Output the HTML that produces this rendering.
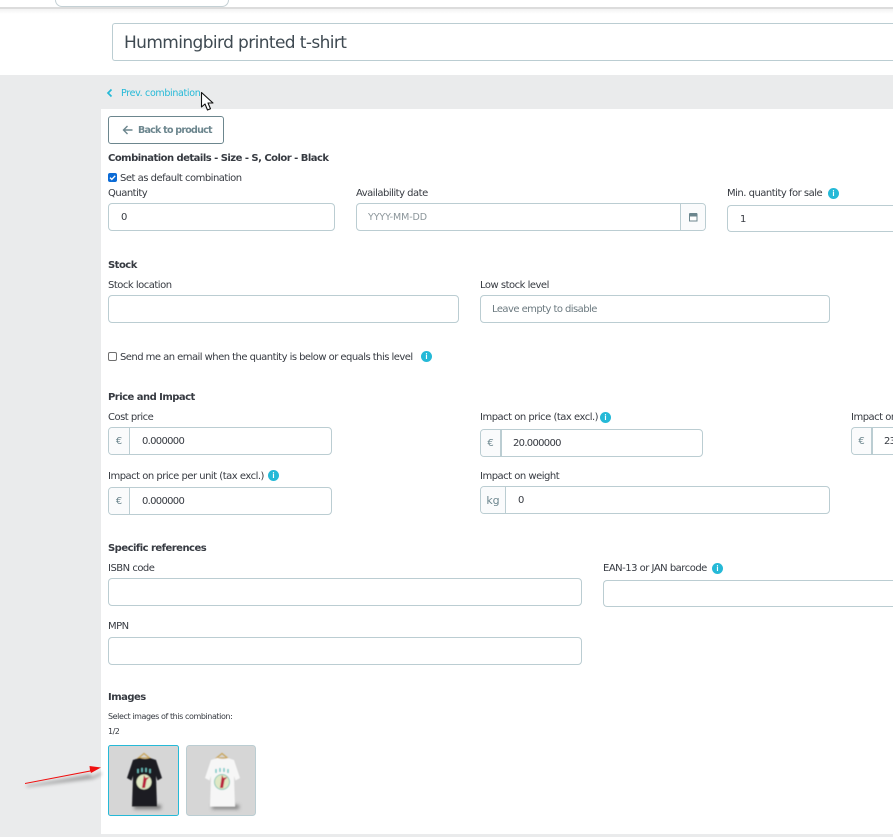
<!DOCTYPE html>
<html><head><meta charset="utf-8">
<style>
html,body{margin:0;padding:0;overflow:hidden}
body{width:893px;height:837px;position:relative;background:#eaebec;font-family:"DejaVu Sans","Liberation Sans",sans-serif;color:#363a41}
div,span{position:absolute;box-sizing:border-box}
.t{white-space:nowrap;font-size:10px;line-height:14px;letter-spacing:-.5px;margin-top:2px}
.b{font-weight:bold;letter-spacing:-.52px}
.i{border:1px solid #bbcdd2;border-radius:4px;background:#fff;height:28px}
.o{border-right:0;border-radius:4px 0 0 4px}
.a{position:absolute;left:0;top:0;bottom:0;background:#fafbfc;border-right:1px solid #bbcdd2;border-radius:3px 0 0 3px;color:#6c868e;text-align:center;font-size:10px;line-height:27px}
.v{font-size:10px;line-height:26px;white-space:nowrap;letter-spacing:-.7px;margin-top:1px}
.n{width:11px;height:11px;border-radius:50%;background:#25b9d7;color:#fff;font-size:8px;line-height:11px;text-align:center;font-weight:bold;font-family:"Liberation Sans",sans-serif}
.cb{width:9px;height:9px;border-radius:2px}
</style></head><body>
<div style="left:0;top:0;width:893px;height:75px;background:#fff"></div>
<div style="left:0;top:7px;width:893px;height:2px;background:#dcdcdc"></div>
<div style="left:0;top:9px;width:893px;height:5px;background:linear-gradient(#f3f3f3,#fff)"></div>
<div style="left:55px;top:0;width:174px;height:7px;border:1px solid #c4d0d4;border-top:0;border-radius:0 0 8px 8px;background:#fff"></div>
<div style="left:112px;top:23px;width:781px;height:38px;border:1px solid #bbcdd2;border-right:0;border-radius:3px 0 0 3px;background:#fff"></div>
<div class="t" style="left:124px;top:29px;font-size:17px;line-height:24px;letter-spacing:-.61px;color:#3f4a52">Hummingbird printed t-shirt</div>

<svg style="position:absolute;left:105px;top:88px" width="10" height="10"><path d="M6.500 1.500L3 5l3.500 3.500" fill="none" stroke="#25b9d7" stroke-width="1.700"/></svg>
<div class="t" style="left:121px;top:85px;color:#25b9d7;font-size:9.5px;letter-spacing:-.33px">Prev. combination</div>

<div style="left:101px;top:109px;width:792px;height:725px;background:#fff"></div>

<svg style="position:absolute;left:200px;top:91px;z-index:5" width="16" height="22"><path d="M1.500 1.500V16l3.500-3 2.500 6 3-1.200-2.500-5.800H13z" fill="#fff" stroke="#111" stroke-width="1.100" stroke-linejoin="round"/></svg>

<div style="left:108px;top:116px;width:116px;height:28px;border:1px solid #6c868e;border-radius:3px;background:#fff"></div>
<svg style="position:absolute;left:122px;top:124px" width="12" height="12"><path d="M10.500 6H2M5.500 2L1.500 6l4 4" fill="none" stroke="#6c868e" stroke-width="1.400"/></svg>
<div class="t b" style="left:138px;top:122px;color:#6c868e;font-size:9.5px;letter-spacing:-.75px">Back to product</div>
<div class="t b" style="left:108px;top:150px">Combination details - Size - S, Color - Black</div>

<div class="cb" style="left:108px;top:173px;background:#0b6bd6"></div>
<svg style="position:absolute;left:108px;top:173px" width="9" height="9"><path d="M2 4.600l1.800 1.800L7.200 2.800" fill="none" stroke="#fff" stroke-width="1.400"/></svg>
<div class="t" style="left:120px;top:170px">Set as default combination</div>

<div class="t" style="left:108px;top:185px">Quantity</div>
<div class="i" style="left:108px;top:203px;width:227px"><span class="v" style="left:12px;top:0">0</span></div>
<div class="t" style="left:356px;top:185px">Availability date</div>
<div class="i" style="left:356px;top:203px;width:350px"><span class="v" style="left:11px;top:0;color:#8a9499;font-size:9.5px;letter-spacing:-.1px">YYYY-MM-DD</span>
<div class="a" style="left:auto;right:0;width:25px;border-right:0;border-left:1px solid #bbcdd2;border-radius:0 3px 3px 0"></div>
<svg style="position:absolute;left:332px;top:9px" width="9" height="9"><rect x=".5" y="1" width="7.500" height="7" fill="#fff" stroke="#6c868e" stroke-width="1"/><rect x=".5" y="0" width="7.500" height="3.500" fill="#6c868e"/></svg></div>
<div class="t" style="left:727px;top:185px">Min. quantity for sale</div>
<div class="n" style="left:828px;top:188px">i</div>
<div class="i o" style="left:727px;top:205px;width:166px;height:27px"><span class="v" style="left:12px;top:0">1</span></div>

<div class="t b" style="left:108px;top:257px">Stock</div>
<div class="t" style="left:108px;top:277px">Stock location</div>
<div class="i" style="left:108px;top:295px;width:351px"></div>
<div class="t" style="left:480px;top:277px">Low stock level</div>
<div class="i" style="left:480px;top:295px;width:350px"><span class="v" style="left:11px;top:0;color:#6c7a80;letter-spacing:-.56px">Leave empty to disable</span></div>

<div class="cb" style="left:108px;top:352px;background:#fff;border:1px solid #6f6f6f"></div>
<div class="t" style="left:120px;top:349px;letter-spacing:-.54px">Send me an email when the quantity is below or equals this level</div>
<div class="n" style="left:421px;top:351px">i</div>

<div class="t b" style="left:108px;top:389px">Price and Impact</div>
<div class="t" style="left:108px;top:409px">Cost price</div>
<div class="i" style="left:108px;top:427px;width:224px"><div class="a" style="width:21px">€</div><span class="v" style="left:33px;top:0">0.000000</span></div>
<div class="t" style="left:480px;top:409px">Impact on price (tax excl.)</div>
<div class="n" style="left:600px;top:412px">i</div>
<div class="i" style="left:480px;top:429px;width:223px"><div class="a" style="width:21px;border-right-width:2px">€</div><span class="v" style="left:32px;top:0">20.000000</span></div>
<div class="t" style="left:851px;top:409px;width:42px;overflow:hidden">Impact on price</div>
<div class="i o" style="left:851px;top:427px;width:42px;overflow:hidden"><div class="a" style="width:21px;border-right-width:2px">€</div><span class="v" style="left:32px;top:0;width:9px;overflow:hidden">23</span></div>

<div class="t" style="left:108px;top:468px">Impact on price per unit (tax excl.)</div>
<div class="n" style="left:268px;top:470px">i</div>
<div class="i" style="left:108px;top:487px;width:224px"><div class="a" style="width:21px">€</div><span class="v" style="left:33px;top:0">0.000000</span></div>
<div class="t" style="left:480px;top:468px">Impact on weight</div>
<div class="i" style="left:480px;top:486px;width:350px"><div class="a" style="width:25px;font-size:11px">kg</div><span class="v" style="left:37px;top:0">0</span></div>

<div class="t b" style="left:108px;top:540px">Specific references</div>
<div class="t" style="left:108px;top:560px">ISBN code</div>
<div class="i" style="left:108px;top:578px;width:474px"></div>
<div class="t" style="left:603px;top:560px">EAN-13 or JAN barcode</div>
<div class="n" style="left:712px;top:563px">i</div>
<div class="i o" style="left:603px;top:580px;width:290px;height:27px"></div>
<div class="t" style="left:108px;top:618px">MPN</div>
<div class="i" style="left:108px;top:637px;width:474px"></div>

<div class="t b" style="left:108px;top:689px">Images</div>
<div class="t" style="left:108px;top:708px;font-size:8px;letter-spacing:-.42px">Select images of this combination:</div>
<div class="t" style="left:108px;top:723px;font-size:8px">1/2</div>

<svg style="position:absolute;left:108px;top:745px" width="148" height="71">
<defs><filter id="f" x="-20%" y="-20%" width="140%" height="140%"><feGaussianBlur stdDeviation=".45"/></filter><filter id="s" x="-30%" y="-100%" width="160%" height="300%"><feGaussianBlur stdDeviation="1.800"/></filter></defs>
<rect x=".5" y=".5" width="70" height="70" rx="2" fill="#d6d6d6" stroke="#25b9d7"/>
<rect x="78.500" y=".5" width="69" height="70" rx="3" fill="#d6d6d6" stroke="#bbcdd2"/>
<g filter="url(#f)">
<rect x="26" y="60" width="27" height="4" fill="#6e6e6e" filter="url(#s)"/>
<path d="M36 8.500l-5.500 4.500h11z" fill="none" stroke="#c9a55c" stroke-width="1.300"/>
<path d="M31 13L25 15 19 33l4.500 2.500 1.500-4.500-1 30.500h25l-1-30.500 1.500 4.500 4.500-2.500-6-18-6-2q-5 2-10 0z" fill="#1b1c20"/>
<path d="M30 24v4M34 23v4M38 23v4M42 24v4" stroke="#6fc8c5" stroke-width="1.500"/>
<circle cx="36" cy="37" r="7.500" fill="#dfe8c4"/>
<path d="M36 30l-2 13h3l1.500-8 3-3-4 1z" fill="#b9203c"/>
</g>
<g filter="url(#f)" transform="translate(78 0)">
<rect x="26" y="60" width="27" height="4" fill="#7c7c7c" filter="url(#s)"/>
<path d="M36 8.500l-5.500 4.500h11z" fill="none" stroke="#c9a55c" stroke-width="1.300"/>
<path d="M31 13L25 15 19 33l4.500 2.500 1.500-4.500-1 30.500h25l-1-30.500 1.500 4.500 4.500-2.500-6-18-6-2q-5 2-10 0z" fill="#f6f6f6"/>
<path d="M30 24v4M34 23v4M38 23v4M42 24v4" stroke="#6fc8c5" stroke-width="1.500"/>
<circle cx="36" cy="37" r="7.500" fill="#dfe8c4" stroke="#8cc9bb"/>
<path d="M36 30l-2 13h3l1.500-8 3-3-4 1z" fill="#b9203c"/>
</g>
</svg>

<svg style="position:absolute;left:20px;top:760px" width="85" height="30">
<path d="M6 25.500L71 14l0 3 11-5-1 3-8 4L7 27z" fill="#555" opacity=".45" filter="url(#s)"/>
<path d="M5 23L70 10.500 69.500 6 81 7.500 71 13l-.5-1.500L5 24z" fill="#f01010"/>
</svg>
</body></html>
